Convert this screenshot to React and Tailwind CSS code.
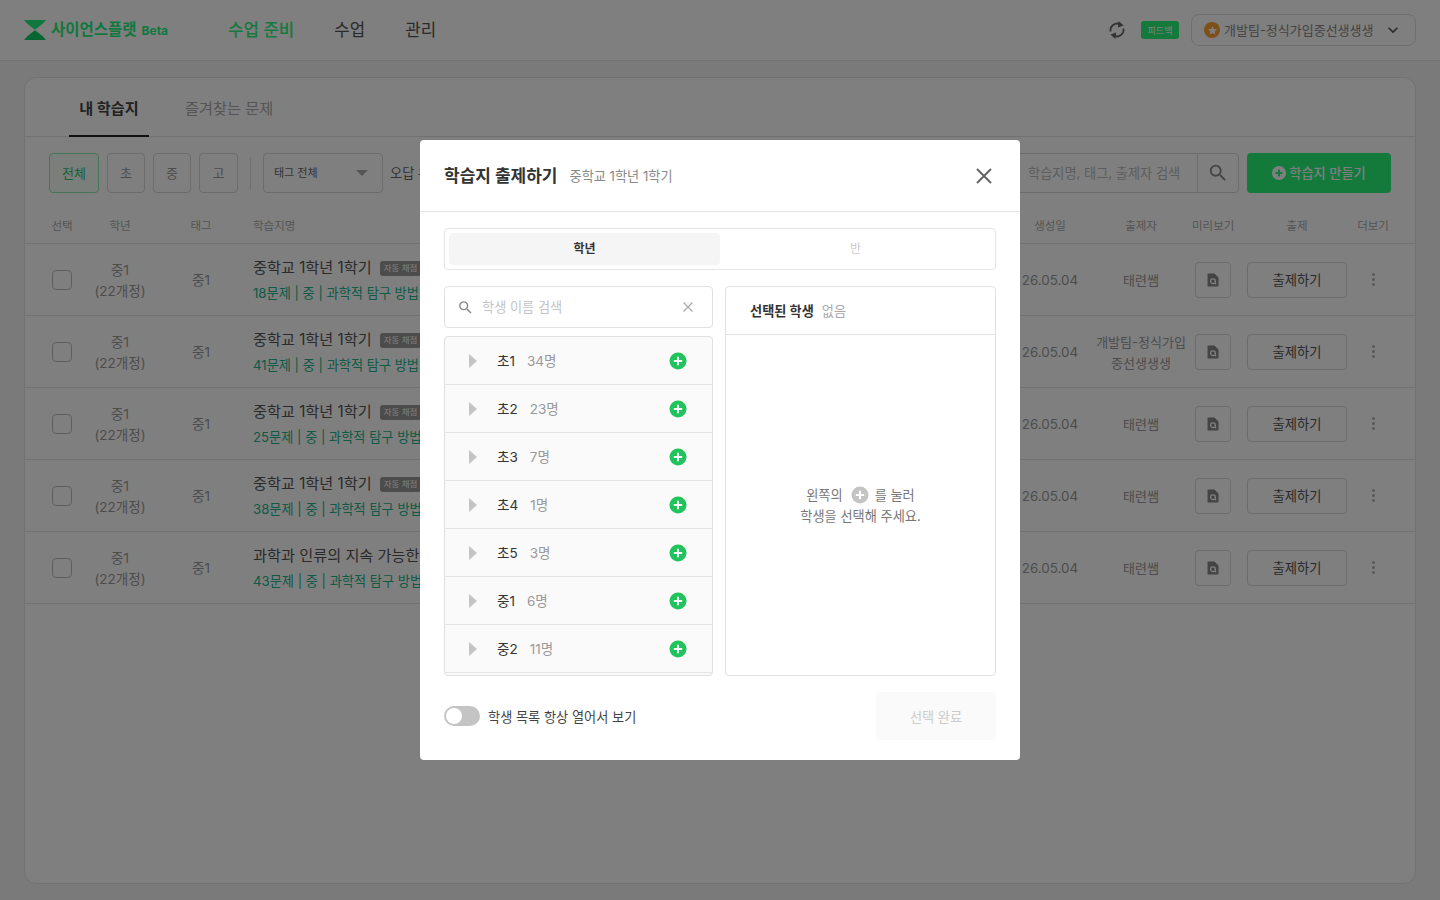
import React from "react";
import { MdSearch, MdKeyboardArrowDown, MdStar } from "react-icons/md";

const font = { fontFamily: 'Inter, "Noto Sans CJK KR", sans-serif' };

const rows = [
  ["중학교 1학년 1학기", "18문제", "태련쌤"],
  ["중학교 1학년 1학기", "41문제", "개발팀-정식가입 중선생생생"],
  ["중학교 1학년 1학기", "25문제", "태련쌤"],
  ["중학교 1학년 1학기", "38문제", "태련쌤"],
  ["과학과 인류의 지속 가능한 삶", "43문제", "태련쌤"],
];
const grades = [["초1", "34명"], ["초2", "23명"], ["초3", "7명"], ["초4", "1명"], ["초5", "3명"], ["중1", "6명"], ["중2", "11명"]];
const cols = "grid grid-cols-[50px_66px_96px_761px_80px_102px_42px_126px_26px] items-center";

function Logo() {
  return (
    <svg width="22" height="20" viewBox="0 0 22 20" className="shrink-0">
      <path d="M0 0H22L18.5 4L11 9.7L3.5 4Z" fill="#1cf07c" />
      <path d="M0 20H22L18.5 16L11 10.3L3.5 16Z" fill="#12cc64" />
    </svg>
  );
}

function Sync() {
  return (
    <svg width="20" height="20" viewBox="0 0 20 20">
      <g fill="none" stroke="#666" strokeWidth="1.8">
        <path d="M3.6 11.5A6.6 6.6 0 0 1 13.2 4.4" />
        <path d="M16.4 8.5A6.6 6.6 0 0 1 6.8 15.6" />
      </g>
      <path d="M11.6 1L16.6 5.4L10.8 7.6Z" fill="#666" />
      <path d="M8.4 19L3.4 14.6L9.2 12.4Z" fill="#666" />
    </svg>
  );
}

function Plus({ gray }) {
  return (
    <svg width="18" height="18" viewBox="0 0 18 18" className="shrink-0">
      <circle cx="9" cy="9" r="8.5" fill={gray ? "#c4c4c4" : "#1fc45c"} />
      <path d="M9 4.8V13.2M4.8 9H13.2" stroke="#fff" strokeWidth="2" />
    </svg>
  );
}

function DocSearch() {
  return (
    <svg width="14" height="14" viewBox="0 0 14 14">
      <path d="M1.5 1.5A1 1 0 0 1 2.5 .5H8.5L12.5 4.5V12.5A1 1 0 0 1 11.5 13.5H2.5A1 1 0 0 1 1.5 12.5Z" fill="#888" />
      <circle cx="7" cy="8.2" r="2.4" fill="none" stroke="#fff" strokeWidth="1.3" />
      <path d="M8.8 10L10.2 11.4" stroke="#fff" strokeWidth="1.3" />
    </svg>
  );
}

function Row({ r }) {
  return (
    <div className={`${cols} h-[72px] px-[12px] border-b border-[#e2e2e2] shrink-0`}>
      <div className="flex justify-center">
        <div className="w-5 h-5 rounded-[4px] border border-[#bdbdbd] bg-white" />
      </div>
      <div className="pt-[2px] text-center text-[13.5px] leading-[21px] text-[#999]">중1<br />(22개정)</div>
      <div className="pt-[2px] text-center text-[13.5px] text-[#999]">중1</div>
      <div className="pl-1 pt-[2px]">
        <div className="flex items-center gap-2">
          <span className="text-[15.2px] leading-[22px] text-[#555]">{r[0]}</span>
          <span className="h-[15px] px-1 rounded-[3px] bg-[#999] text-white text-[8.5px] leading-[15px] whitespace-nowrap">자동 채점</span>
        </div>
        <div className="text-[13.2px] leading-[21px] mt-[4px] text-[#20b48c]">{r[1]} | 중 | 과학적 탐구 방법</div>
      </div>
      <div className="pt-[2px] text-center text-[13.4px] text-[#999]">26.05.04</div>
      <div className="pt-[2px] text-center text-[13px] leading-[21px] text-[#999]">{r[2]}</div>
      <div className="flex justify-center">
        <div className="w-9 h-9 rounded-[4px] border border-[#d8d8d8] flex items-center justify-center"><DocSearch /></div>
      </div>
      <div className="flex justify-center">
        <div className="w-[100px] h-9 pt-[2px] rounded-[4px] border border-[#d8d8d8] flex items-center justify-center text-[13.3px] text-[#555]">출제하기</div>
      </div>
      <div className="flex flex-col items-center gap-[2px]">
        <i className="w-[3px] h-[3px] rounded-full bg-[#b0b0b0]" />
        <i className="w-[3px] h-[3px] rounded-full bg-[#b0b0b0]" />
        <i className="w-[3px] h-[3px] rounded-full bg-[#b0b0b0]" />
      </div>
    </div>
  );
}

function Background() {
  return (
    <div className="h-full flex flex-col bg-[#f5f5f5]">
      <header className="h-[61px] shrink-0 bg-white border-b border-[#e4e4e4] pl-[24px] pr-[24px] flex items-center">
        <Logo />
        <span className="ml-[5px] text-[15.5px] font-semibold text-[#1cf07c]">사이언스플랫</span>
        <span className="ml-[5px] text-[12px] font-bold text-[#1cf07c] mt-[1px]">Beta</span>
        <nav className="ml-[60px] pt-[2px] flex items-center gap-10 text-[16.8px] text-[#555]">
          <span className="font-medium text-[#2cf27e]">수업 준비</span>
          <span>수업</span>
          <span>관리</span>
        </nav>
        <div className="ml-auto flex items-center">
          <Sync />
          <span className="ml-[14px] w-[38px] h-[18px] rounded-[3px] bg-[#26f476] text-white text-[9px] leading-[20px] text-center">피드백</span>
          <div className="ml-[12px] w-[225px] h-[32px] rounded-[8px] border border-[#dcdcdc] flex items-center pl-[12px] pr-[12px]">
            <span className="w-4 h-4 rounded-full bg-[#ff9f30] flex items-center justify-center shrink-0"><MdStar size={11} className="text-white" /></span>
            <span className="ml-[4px] text-[13px] mt-[1px] text-[#888] whitespace-nowrap">개발팀-정식가입중선생생생</span>
            <MdKeyboardArrowDown size={20} className="ml-auto text-[#555] shrink-0" />
          </div>
        </div>
      </header>
      <main className="flex-1 min-h-0 pt-[16px] pb-[16px] px-[24px] flex">
        <section className="flex-1 bg-white border border-[#e2e2e2] rounded-[12px] flex flex-col overflow-hidden">
          <div className="h-[59px] shrink-0 border-b border-[#e2e2e2] flex pl-[44px] gap-9 items-stretch">
            <div className="w-[80px] border-b-2 border-[#222] h-[59px] pt-[6px] flex items-center justify-center text-[15.2px] font-bold text-[#444]">내 학습지</div>
            <div className="flex items-center pt-[4px] text-[15.2px] text-[#aaa]">즐겨찾는 문제</div>
          </div>
          <div className="flex items-center h-[40px] mt-[16px] ml-[24px] mr-[24px] shrink-0">
            <div className="w-[50px] h-10 pt-[2px] rounded-[4px] border border-[#8ce8b0] bg-[#f4fff8] flex items-center justify-center text-[13px] text-[#30c070]">전체</div>
            <div className="ml-2 w-[38px] h-10 pt-[2px] rounded-[4px] border border-[#d8d8d8] flex items-center justify-center text-[13px] text-[#999]">초</div>
            <div className="ml-2 w-[38px] h-10 pt-[2px] rounded-[4px] border border-[#d8d8d8] flex items-center justify-center text-[13px] text-[#999]">중</div>
            <div className="ml-2 w-[39px] h-10 pt-[2px] rounded-[4px] border border-[#d8d8d8] flex items-center justify-center text-[13px] text-[#999]">고</div>
            <div className="ml-3 w-px h-8 bg-[#dcdcdc]" />
            <div className="ml-3 w-[120px] h-10 rounded-[4px] border border-[#d8d8d8] flex items-center px-[10px] text-[11px] text-[#666]">
              <span>태그 전체</span>
              <span className="ml-auto mr-[4px] w-0 h-0 border-x-[6px] border-x-transparent border-t-[6px] border-t-[#aaa]" />
            </div>
            <span className="ml-[7px] pt-[2px] text-[13.2px] text-[#666]">오답 유형</span>
            <div className="ml-auto w-[280px] h-10 rounded-[4px] border border-[#d8d8d8] flex items-center">
              <span className="flex-1 pl-[68px] pt-[2px] text-[13.2px] text-[#bbb]">학습지명, 태그, 출제자 검색</span>
              <span className="w-[41px] h-full border-l border-[#d8d8d8] flex items-center justify-center"><MdSearch size={22} className="text-[#888]" /></span>
            </div>
            <div className="ml-2 w-[144px] h-10 rounded-[4px] bg-[#26f476] flex items-center justify-center gap-[3px] text-[13.2px] font-medium text-white">
              <svg width="14" height="14" viewBox="0 0 14 14"><circle cx="7" cy="7" r="7" fill="#fff" /><path d="M7 3.5V10.5M3.5 7H10.5" stroke="#26f476" strokeWidth="2" /></svg>
              <span className="pt-[2px]">학습지 만들기</span>
            </div>
          </div>
          <div className={`${cols} h-[38px] mt-[13px] pt-[5px] px-[12px] border-b border-[#e2e2e2] text-[11.5px] text-[#aaa] whitespace-nowrap shrink-0`}>
            <span className="text-center">선택</span>
            <span className="text-center">학년</span>
            <span className="text-center">태그</span>
            <span className="pl-1">학습지명</span>
            <span className="text-center">생성일</span>
            <span className="text-center">출제자</span>
            <span className="text-center">미리보기</span>
            <span className="text-center">출제</span>
            <span className="flex justify-center">더보기</span>
          </div>
          {rows.map((r, i) => <Row key={i} r={r} />)}
        </section>
      </main>
    </div>
  );
}

function Modal() {
  return (
    <div className="w-[600px] h-[620px] bg-white rounded-[4px] flex flex-col">
      <div className="h-[72px] shrink-0 border-b border-[#e5e5e5] flex items-center px-6">
        <span className="pt-[2px] text-[17px] leading-[27px] font-bold text-[#333]">학습지 출제하기</span>
        <span className="ml-3 pt-[2px] text-[13.2px] text-[#888]">중학교 1학년 1학기</span>
        <svg width="16" height="16" viewBox="0 0 16 16" className="ml-auto mr-[4px]"><path d="M1 1L15 15M15 1L1 15" stroke="#666" strokeWidth="2" /></svg>
      </div>
      <div className="flex-1 min-h-0 px-6 pt-4 flex flex-col">
        <div className="h-[42px] shrink-0 border border-[#e5e5e5] rounded-[4px] p-[4px] grid grid-cols-2">
          <div className="bg-[#f5f5f5] rounded-[4px] flex items-center justify-center text-[12px] font-semibold text-[#333]">학년</div>
          <div className="flex items-center justify-center text-[12px] text-[#ccc]">반</div>
        </div>
        <div className="mt-4 flex gap-3 h-[390px] shrink-0">
          <div className="w-[269px] flex flex-col">
            <div className="h-[42px] shrink-0 border border-[#e0e0e0] rounded-[4px] flex items-center pl-[12px] pr-[19px]">
              <MdSearch size={17} className="text-[#888]" />
              <span className="ml-[8px] pt-[2px] text-[13.2px] text-[#c4c4c4]">학생 이름 검색</span>
              <svg width="10" height="10" viewBox="0 0 10 10" className="ml-auto"><path d="M.5 .5L9.5 9.5M9.5 .5L.5 9.5" stroke="#aaa" strokeWidth="1.2" /></svg>
            </div>
            <div className="mt-2 h-[340px] border border-[#e0e0e0] rounded-[4px] overflow-hidden bg-[#fafafa]">
              {grades.map(([g, n]) => (
                <div key={g} className="h-[48px] border-b border-[#e5e5e5] flex items-center pl-[24px] pr-[25px]">
                  <span className="w-0 h-0 border-y-[7px] border-y-transparent border-l-[8px] border-l-[#c4c4c4]" />
                  <span className="ml-[20px] pt-[2px] text-[13.5px] text-[#333]">{g}</span>
                  <span className="ml-3 pt-[2px] text-[13.5px] text-[#999]">{n}</span>
                  <span className="ml-auto"><Plus /></span>
                </div>
              ))}
            </div>
          </div>
          <div className="flex-1 border border-[#e0e0e0] rounded-[4px] flex flex-col">
            <div className="h-[48px] shrink-0 border-b border-[#e0e0e0] flex items-center pl-[24px]">
              <span className="pt-[2px] text-[13.2px] font-bold text-[#333]">선택된 학생</span>
              <span className="ml-2 pt-[2px] text-[13.2px] text-[#aaa]">없음</span>
            </div>
            <div className="flex-1 pt-[2px] flex flex-col items-center justify-center text-[13.2px] leading-[21px] text-[#777]">
              <div className="flex items-center"><span>왼쪽의</span><span className="ml-2 mb-[2px]"><Plus gray /></span><span className="ml-[6px]">를 눌러</span></div>
              <div>학생을 선택해 주세요.</div>
            </div>
          </div>
        </div>
        <div className="mt-4 h-[48px] shrink-0 flex items-center">
          <div className="w-9 h-5 rounded-full bg-[#c4c4c4] p-[2px]"><div className="w-4 h-4 rounded-full bg-white" /></div>
          <span className="ml-2 pt-[4px] text-[13.2px] text-[#444]">학생 목록 항상 열어서 보기</span>
          <div className="ml-auto w-[120px] h-12 pt-[4px] rounded-[4px] bg-[#fafafa] flex items-center justify-center text-[13.2px] text-[#ccc]">선택 완료</div>
        </div>
      </div>
    </div>
  );
}

export default function App() {
  return (
    <div className="relative w-full h-screen overflow-hidden" style={font}>
      <Background />
      <div className="absolute inset-0 bg-black/50 flex items-center justify-center">
        <Modal />
      </div>
    </div>
  );
}
